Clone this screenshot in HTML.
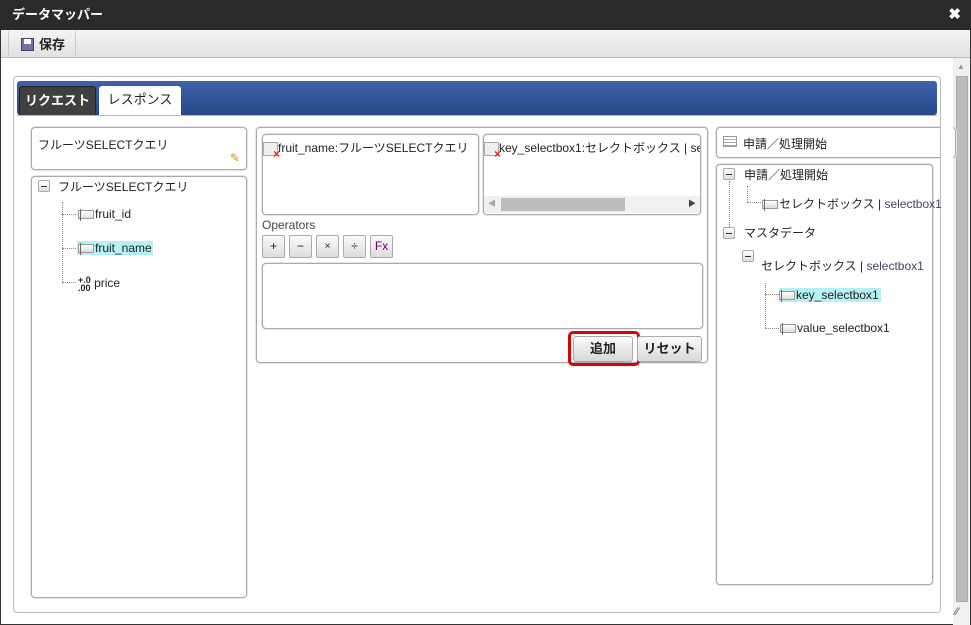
<!DOCTYPE html>
<html><head><meta charset="utf-8"><style>
*{box-sizing:border-box}
body{margin:0;width:971px;height:625px;overflow:hidden;font-family:"Liberation Sans","Noto Sans CJK JP",sans-serif;font-size:12px;color:#222;background:#fff;position:relative}
.a{position:absolute}
.box{position:absolute;border:1px solid #aaa;border-radius:4px;background:#fff;box-shadow:0 0 0 1px #e6e6e6}
.fld{display:inline-block;width:16px;height:9px;border:1px solid #999;background:linear-gradient(#fff,#ddd);vertical-align:middle;margin-right:1px;position:relative}
.fld:before{content:"";position:absolute;left:1px;top:-2px;width:1px;height:12px;background:#666}
.minus{position:absolute;width:12px;height:12px;border:1px solid #aaa;background:linear-gradient(#fff,#ddd);border-radius:2px}
.minus:after{content:"";position:absolute;left:2px;top:5px;width:6px;height:1px;background:#333}
.dv{position:absolute;border-left:1px dotted #888}
.dh{position:absolute;border-top:1px dotted #888}
.op{position:absolute;top:235px;width:23px;height:23px;border:1px solid #aaa;border-radius:2px;background:linear-gradient(#fafafa,#ddd);text-align:center;line-height:21px;font-size:12px}
.btn{position:absolute;border:1px solid #aaa;border-radius:3px;background:linear-gradient(#fafafa,#d8d8d8);text-align:center;font-weight:bold;font-size:13px;line-height:24px}
.img{display:inline-block;width:15px;height:14px;border:1px solid #aaa;background:#eee;vertical-align:middle;position:relative}
.img:after{content:"×";position:absolute;right:-3px;bottom:-6px;color:#e22;font-weight:bold;font-size:12px}
.sel{background:#b5f0f3}
</style></head><body>
<div class="a" style="left:0;top:0;width:971px;height:625px;border:1px solid #333"></div>
<div class="a" style="left:0;top:0;width:971px;height:30px;background:#2a2a2a;color:#fff;font-weight:bold;font-size:13px;line-height:30px;padding-left:12px">データマッパー<span style="position:absolute;right:10px;font-size:15px">✖</span></div>
<div class="a" style="left:1px;top:30px;width:969px;height:28px;background:linear-gradient(#f4f4f4,#e2e2e2);border-bottom:1px solid #bbb"></div>
<div class="a" style="left:8px;top:31px;width:68px;height:27px;border-left:1px solid #ccc;border-right:1px solid #ccc;font-weight:bold;font-size:13px;line-height:27px;padding-left:12px"><span style="display:inline-block;width:13px;height:13px;background:#7a6aaa;border:1px solid #4a3a7a;vertical-align:-2px;margin-right:5px;position:relative"><span style="position:absolute;left:2px;top:0;width:7px;height:5px;background:#fff"></span></span>保存</div>
<div class="a" style="left:953px;top:58px;width:17px;height:567px;background:#f0f0f0"></div>
<div class="a" style="left:956px;top:76px;width:12px;height:526px;background:#bcbcbc;border:1px solid #aaa"></div>
<div class="a" style="left:957px;top:62px;color:#999;font-size:8px">▲</div>
<div class="a" style="left:955px;top:606px;color:#555;font-size:11px">⁄⁄</div>
<div class="a" style="left:13px;top:76px;width:928px;height:537px;border:1px solid #bbb;border-radius:4px"></div>
<div class="a" style="left:17px;top:81px;width:920px;height:34px;background:linear-gradient(#3e62ae,#2a4886);border-radius:3px"></div>
<div class="a" style="left:19px;top:86px;width:77px;height:29px;background:#404040;border:1px solid #222;border-bottom:none;border-radius:3px 3px 0 0;color:#fff;font-weight:bold;font-size:13px;text-align:center;line-height:28px">リクエスト</div>
<div class="a" style="left:99px;top:86px;width:82px;height:30px;background:#fff;border-radius:3px 3px 0 0;font-size:13px;text-align:center;line-height:28px">レスポンス</div>
<div class="a" style="left:17px;top:115px;width:920px;height:1px;background:#bbb"></div>

<div class="box" style="left:31px;top:127px;width:216px;height:43px;padding:8px 6px">フルーツSELECTクエリ<span style="position:absolute;right:6px;bottom:4px;color:#c90;font-size:12px">✎</span></div>
<div class="box" style="left:31px;top:176px;width:216px;height:422px"></div>
<div class="minus" style="left:38px;top:180px"></div>
<div class="a" style="left:58px;top:178px">フルーツSELECTクエリ</div>
<div class="dv" style="left:62px;top:202px;height:80px"></div>
<div class="dh" style="left:62px;top:214px;width:14px"></div>
<div class="dh" style="left:62px;top:248px;width:14px"></div>
<div class="dh" style="left:62px;top:282px;width:14px"></div>
<div class="a" style="left:78px;top:207px"><span class="fld"></span>fruit_id</div>
<div class="a sel" style="left:77px;top:241px;padding:0 1px"><span class="fld"></span>fruit_name</div>
<div class="a" style="left:78px;top:276px"><span style="font-size:9px;font-weight:bold;line-height:8px;display:inline-block;vertical-align:middle">+.0<br>.00</span> price</div>

<div class="box" style="left:256px;top:127px;width:452px;height:236px"></div>
<div class="box" style="left:262px;top:134px;width:217px;height:81px;padding:4px 0 0 0;white-space:nowrap;overflow:hidden"><span class="img"></span>fruit_name:フルーツSELECTクエリ</div>
<div class="box" style="left:483px;top:134px;width:218px;height:81px;padding:4px 0 0 0;white-space:nowrap;overflow:hidden"><span class="img"></span>key_selectbox1:セレクトボックス | selectbox1
<div class="a" style="left:0;top:61px;width:216px;height:17px;background:#f0f0f0"></div>
<div class="a" style="left:17px;top:63px;width:124px;height:13px;background:#bcbcbc"></div>
<div class="a" style="left:4px;top:63px;font-size:8px;color:#aaa">◀</div>
<div class="a" style="left:204px;top:63px;font-size:8px;color:#444">▶</div></div>
<div class="a" style="left:262px;top:218px;color:#444">Operators</div>
<div class="op" style="left:262px">+</div><div class="op" style="left:289px">−</div><div class="op" style="left:316px;font-size:10px">×</div><div class="op" style="left:343px">÷</div><div class="op" style="left:370px;color:#606">Fx</div>
<div class="box" style="left:262px;top:263px;width:441px;height:66px"></div>
<div class="a" style="left:568px;top:331px;width:72px;height:35px;border:3px solid #d00;border-radius:5px"></div>
<div class="btn" style="left:573px;top:336px;width:60px;height:26px">追加</div>
<div class="btn" style="left:637px;top:336px;width:65px;height:26px">リセット</div>

<div class="box" style="left:716px;top:127px;width:240px;height:31px;padding:7px 0 0 26px;font-size:12px">申請／処理開始</div>
<div class="a" style="left:723px;top:136px;width:14px;height:11px;border:1px solid #999;background:repeating-linear-gradient(#fff 0 2px,#aaa 2px 3px)"></div>
<div class="a" style="left:941px;top:118px;width:12px;height:50px;background:#fff"></div>
<div class="a" style="left:940px;top:118px;width:1px;height:50px;background:#bbb"></div>
<div class="box" style="left:716px;top:164px;width:217px;height:421px"></div>
<div class="minus" style="left:723px;top:168px"></div>
<div class="a" style="left:744px;top:166px">申請／処理開始</div>
<div class="dv" style="left:729px;top:181px;height:46px"></div>
<div class="dv" style="left:747px;top:186px;height:16px"></div>
<div class="dh" style="left:747px;top:202px;width:14px"></div>
<div class="a" style="left:762px;top:195px;white-space:nowrap"><span class="fld"></span>セレクトボックス | <span style="color:#446">selectbox1</span></div>
<div class="minus" style="left:723px;top:227px"></div>
<div class="a" style="left:744px;top:224px">マスタデータ</div>
<div class="minus" style="left:742px;top:250px"></div>
<div class="a" style="left:761px;top:257px;white-space:nowrap">セレクトボックス | <span style="color:#446">selectbox1</span></div>
<div class="dv" style="left:765px;top:283px;height:45px"></div>
<div class="dh" style="left:765px;top:294px;width:14px"></div>
<div class="dh" style="left:765px;top:328px;width:14px"></div>
<div class="a sel" style="left:779px;top:288px;padding-right:2px"><span class="fld"></span>key_selectbox1</div>
<div class="a" style="left:780px;top:321px"><span class="fld"></span>value_selectbox1</div>
</body></html>
